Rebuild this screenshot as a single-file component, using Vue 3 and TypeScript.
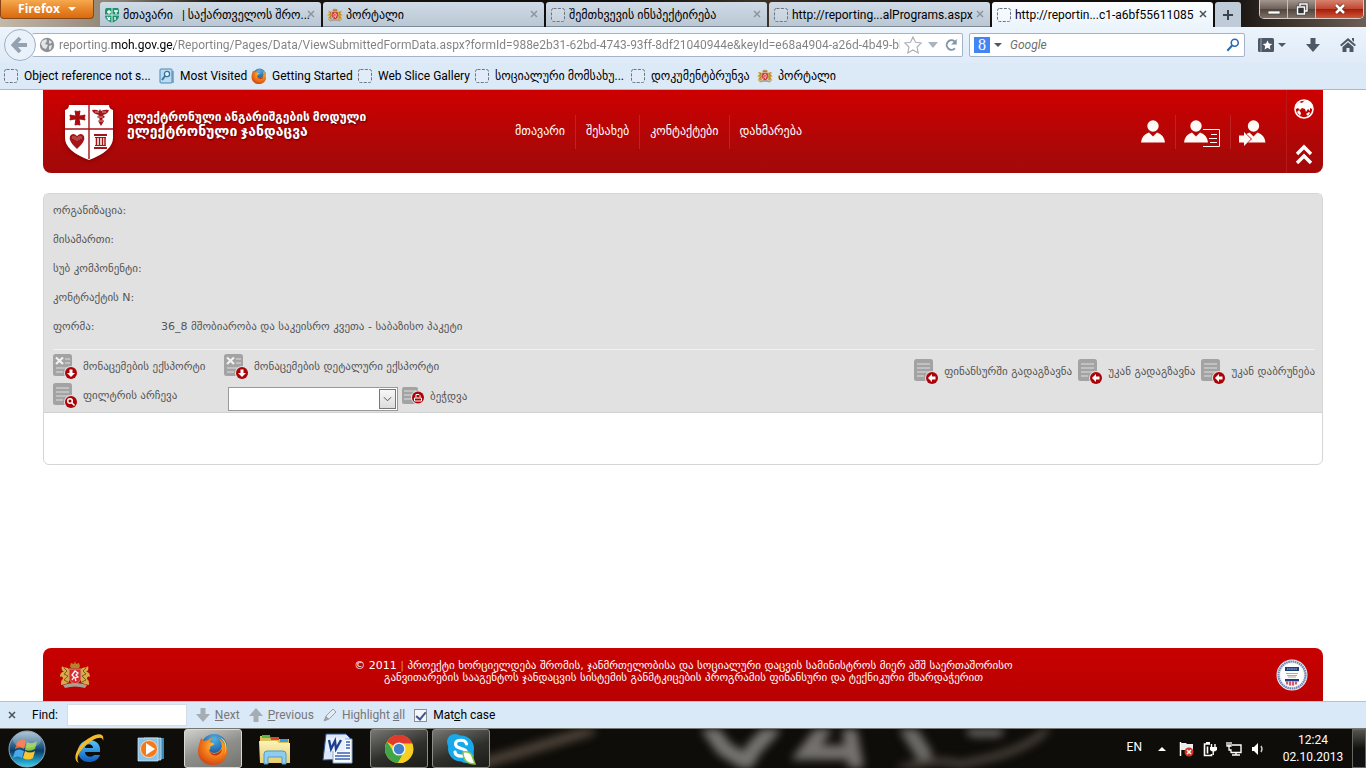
<script setup lang="ts">
import { ref } from 'vue'

interface Tab { title: string; icon: string; active?: boolean }
interface Mark { title: string; icon: string }
interface Field { label: string; value: string }
interface Action { label: string; icon: string }
interface TaskItem { name: string; icon: string; state?: string }

const tabs: Tab[] = [
  { title: 'მთავარი\u00a0\u00a0 | საქართველოს შრო...', icon: 'shield' },
  { title: 'პორტალი', icon: 'arms' },
  { title: 'შემთხვევის ინსპექტირება', icon: 'blank' },
  { title: 'http://reporting...alPrograms.aspx', icon: 'blank' },
  { title: 'http://reportin...c1-a6bf55611085', icon: 'blank', active: true },
]

const marks: Mark[] = [
  { title: 'Object reference not s...', icon: 'blank' },
  { title: 'Most Visited', icon: 'visited' },
  { title: 'Getting Started', icon: 'firefox' },
  { title: 'Web Slice Gallery', icon: 'blank' },
  { title: 'სოციალური მომსახუ...', icon: 'blank' },
  { title: 'დოკუმენტბრუნვა', icon: 'blank' },
  { title: 'პორტალი', icon: 'arms' },
]

const nav: string[] = ['მთავარი', 'შესახებ', 'კონტაქტები', 'დახმარება']

const userLinks: Action[] = [
  { label: 'User', icon: 'user' },
  { label: 'Profile', icon: 'profile' },
  { label: 'Sign in', icon: 'signin' },
]

const fields: Field[] = [
  { label: 'ორგანიზაცია:', value: '' },
  { label: 'მისამართი:', value: '' },
  { label: 'სუბ კომპონენტი:', value: '' },
  { label: 'კონტრაქტის N:', value: '' },
  { label: 'ფორმა:', value: '36_8 მშობიარობა და საკეისრო კვეთა - საბაზისო პაკეტი' },
]

const sendActions: Action[] = [
  { label: 'ფინანსურში გადაგზავნა', icon: 'doc-left' },
  { label: 'უკან გადაგზავნა', icon: 'doc-left' },
  { label: 'უკან დაბრუნება', icon: 'doc-left' },
]

const tasks: TaskItem[] = [
  { name: 'Internet Explorer', icon: 'ie' },
  { name: 'Media Player', icon: 'media' },
  { name: 'Firefox', icon: 'firefox', state: 'current' },
  { name: 'Explorer', icon: 'folder' },
  { name: 'Word', icon: 'word' },
  { name: 'Chrome', icon: 'chrome', state: 'open' },
  { name: 'Skype', icon: 'skype', state: 'open' },
]

const trayIcons: string[] = ['flag', 'power', 'network', 'sound']

const address = ref('reporting.moh.gov.ge/Reporting/Pages/Data/ViewSubmittedFormData.aspx?formId=988e2b31-62bd-4743-93ff-8df21040944e&keyId=e68a4904-a26d-4b49-bb81')
const search = ref('')
const findText = ref('')
const matchCase = ref(true)
const template = ref('')
</script>

<template>
  <svg class="defs" aria-hidden="true">
    <defs>
      <linearGradient id="gOrb" x1="0" y1="0" x2="0" y2="1"><stop offset="0" stop-color="#9db9cc" /><stop offset=".45" stop-color="#1f5684" /><stop offset=".55" stop-color="#0b3b66" /><stop offset="1" stop-color="#35d3f5" /></linearGradient>
      <linearGradient id="gIe" x1="0" y1="0" x2="0" y2="1"><stop offset="0" stop-color="#5ac8fa" /><stop offset="1" stop-color="#0a5cc0" /></linearGradient>
      <radialGradient id="gFox" cx=".6" cy=".3" r=".8"><stop offset="0" stop-color="#ffd23c" /><stop offset=".5" stop-color="#f27a1a" /><stop offset="1" stop-color="#c93a0e" /></radialGradient>
      <radialGradient id="gGlobe" cx=".5" cy=".2" r=".8"><stop offset="0" stop-color="#4fb4ea" /><stop offset="1" stop-color="#0a2f7c" /></radialGradient>
      <linearGradient id="gFolder" x1="0" y1="0" x2="0" y2="1"><stop offset="0" stop-color="#fbf3b8" /><stop offset="1" stop-color="#e8cd6e" /></linearGradient>

      <symbol id="blank" viewBox="0 0 16 16"><rect x="1.5" y="1.5" width="13" height="13" rx="2" fill="#fff" fill-opacity=".15" stroke="#6c7680" stroke-dasharray="3 1.4" /></symbol>
      <symbol id="shield" viewBox="0 0 16 16"><path d="M2 1h12l1 2v6c0 3-3 5-7 7C4 14 1 12 1 9V3z" fill="#1f9270" /><path d="M8 1v15M1 8h14" stroke="#d5eee4" /><path d="M5 3v4M3 5h4M10 4h4M12 4v3M3 10l3 3M6 10l-2 3M11 10v3" stroke="#fff" stroke-width="1.3" /></symbol>
      <symbol id="arms" viewBox="0 0 32 28">
        <path d="M11 5l1-3 3 1 1-3 1 3 3-1 1 3-1 2h-8z" fill="#b5832d" />
        <path d="M10 8C7 5 5 8 3 5c-1 3 0 5 2 6-3 0-4 2-4 5 2-1 3 0 3 2-2 1-2 3-2 6 3-1 8-1 8-4zM22 8c3-3 5 0 7-3 1 3 0 5-2 6 3 0 4 2 4 5-2-1-3 0-3 2 2 1 2 3 2 6-3-1-8-1-8-4z" fill="#d9ab48" />
        <path d="M5 7l3 3-3 3 4 2-4 4 4 2M27 7l-3 3 3 3-4 2 4 4-4 2" fill="none" stroke="#7d5c1e" />
        <path d="M10 8h12v8c0 4-3 6-6 7-3-1-6-3-6-7z" fill="#d82b2f" stroke="#b6a072" />
        <path d="M13 19l2-3-2-2 3-4 3 2-2 2 2 2-3 1 1 3" fill="none" stroke="#fff" stroke-width="1.3" />
        <path d="M4 24q12-4 24 0l-2 3q-10-3-20 0z" fill="#a7a293" />
      </symbol>
      <symbol id="visited" viewBox="0 0 16 16"><path d="M3 3h12v12H3z" fill="#7fb2d8" /><rect x="1" y="1" width="12" height="14" rx="1" fill="#b9dcf2" stroke="#4a86b3" /><circle cx="8" cy="6" r="2.6" fill="#e8f6ff" stroke="#3d6f99" stroke-width="1.3" /><path d="M6 8l-3 4" stroke="#3d6f99" stroke-width="1.8" /></symbol>
      <symbol id="firefox" viewBox="0 0 32 32">
        <circle cx="17" cy="14" r="13" fill="url(#gGlobe)" />
        <path d="M4 5l3 3 4-1c2-2 4-2 5-2-2 1-3 3-3 4 2 1 5 1 4 2-1 2-4 2-4 3 1 1 0 3-1 3 2 4 9 4 12-1 2-4 0-8-3-11 6 3 9 8 9 14 0 8-6 13-14 13C7 32 1 26 1 18 1 13 3 9 4 5z" fill="url(#gFox)" />
        <path d="M22 4c7 4 8 12 5 18 4-6 4-15-5-18z" fill="#ffe058" />
        <path d="M12 17c2 5 9 5 13-1-1 8-11 9-13 1z" fill="#b9340c" />
      </symbol>
      <symbol id="star" viewBox="0 0 16 16"><path d="M8 .8l2.2 4.8 5.2.6-3.8 3.600 1 5.200L8 12.400 3.400 15l1-5.200L.6 6.200l5.200-.6z" fill="#fff" stroke="#a9b0b7" /></symbol>
      <symbol id="globe" viewBox="0 0 16 16"><circle cx="8" cy="8" r="7.2" fill="#8f9294" /><path d="M3 4l4-2 1 2-2 3 3 1-2 4-3-1-2-4zM10 3l3 2-2 2-1-1zM10 9l3-1-1 4-2 1z" fill="#e4e5e6" /></symbol>
      <symbol id="lens" viewBox="0 0 16 16"><circle cx="10" cy="5.5" r="4" fill="none" stroke="#2a6cb0" stroke-width="1.8" /><path d="M7 8.5L1.5 14.5" stroke="#2a6cb0" stroke-width="2.4" /></symbol>
      <symbol id="reload" viewBox="0 0 16 16"><path d="M12.5 11.800A5.500 5.500 0 1 1 12 3.600" fill="none" stroke="#8195a6" stroke-width="2.200" /><path d="M14.500 1v6.500H8z" fill="#8195a6" /></symbol>
      <symbol id="bookmarks" viewBox="0 0 16 14"><rect width="16" height="14" rx="1.5" fill="#4c5866" /><path d="M3 0v14" stroke="#96a3b2" /><path d="M9.5 2.5l1.4 3 3.3.4-2.4 2.2.6 3.3-2.9-1.6-2.9 1.6.6-3.3-2.4-2.2 3.3-.4z" fill="#fff" /></symbol>
      <symbol id="down" viewBox="0 0 14 14"><path d="M4.5 0h5v6H14l-7 8-7-8h4.500z" fill="currentColor" /></symbol>
      <symbol id="home" viewBox="0 0 16 16"><path d="M0 8l8-7 8 7-1.500 1.300L8 3.800 1.500 9.300z" fill="#4c5866" /><path d="M2.500 10L8 5.300 13.500 10v5H9.500v-4h-3v4h-4z" fill="#4c5866" /><path d="M12 1h2v4l-2-2z" fill="#4c5866" /></symbol>

      <symbol id="crest" viewBox="0 0 50 56">
        <path d="M5 1h40q0 4 4 5v28q0 13-24 22Q1 47 1 34V6q4-1 4-5z" fill="#fff" />
        <path d="M25 1v54M1 25h48" stroke="#a41518" stroke-width="1.400" />
        <path d="M11 7q3 1 5 0l-1 5q3 0 6-1-1 3 0 5-3-1-6-1l1 6q-3-1-5 0l1-6q-3 0-6 1 1-2 0-5 3 1 6 1z" fill="#a90b0e" stroke="#a90b0e" />
        <path d="M28 6q4-1 7 1l1-2 1 2q4-2 8-1-1 4-6 5l2 2-3 2 2 2-3 5-3-5 2-2-3-2 2-2q-6-1-7-5z" fill="#a41518" /><path d="M31 8h4M38 8h4M34 13h5M34 17h5" stroke="#fff" stroke-width=".6" />
        <path d="M6 32q3-4 7 0 4-4 7 0 2 5-7 13Q4 37 6 32z" fill="#a41518" /><path d="M9 32v3M11 32v4M13 33v4M15 32v4M17 32v3" fill="none" stroke="#dc9c9c" stroke-width=".7" />
        <path d="M30 30h13v2H30zM31 33h11v1H31zM30 43h13v2H30zM31 41h11v1H31z" fill="#a41518" /><path d="M32.500 33v9M35.500 33v9M38.500 33v9M41 33v9" stroke="#a41518" stroke-width="1.500" />
      </symbol>
      <symbol id="user" viewBox="0 0 38 28"><circle cx="12" cy="6" r="5.700" fill="#fffaf5" /><path d="M0 22.500q1-8 8-10l4 4 4-4q7 2 8 10z" fill="#fffaf5" /></symbol>
      <symbol id="profile" viewBox="0 0 38 28"><circle cx="12" cy="6" r="5.700" fill="#fffaf5" /><path d="M0 22.500q1-8 8-10l4 4 4-4q7 2 8 10z" fill="#fffaf5" /><path d="M19 9.500h16.500v17H19M27 14.500h6M25 18.500h8M26 22.500h7" fill="none" stroke="#fffaf5" /></symbol>
      <symbol id="signin" viewBox="0 0 38 28"><circle cx="14.500" cy="6" r="5.700" fill="#fffaf5" /><path d="M2.500 22.500q1-8 8-10l4 4 4-4q7 2 8 10z" fill="#fffaf5" /><path d="M0 14.500h4v-4l9 8.500-9 8.500v-4H0z" fill="#b30506" /><path d="M0 15.500h5V12l7 7-7 7V22.500H0z" fill="#fffaf5" /></symbol>
      <symbol id="world" viewBox="0 0 20 20"><circle cx="10" cy="10" r="9" fill="none" stroke="#fff" stroke-width="1.600" /><path d="M2 7l3-4 3 1 2-2 4 0 4 4 0 4-2-1 0 3-2-2-2 3-1-3-3-1-2 2-2-2-2 1zM3 13l2-2 2 3-1 3zM12 15l3-2 1 1-2 3z" fill="#fff" /></symbol>
      <symbol id="up2" viewBox="0 0 18 20"><path d="M2 10l7-7 7 7M2 19l7-7 7 7" fill="none" stroke="#fff" stroke-width="3.400" /></symbol>

      <symbol id="doc" viewBox="0 0 26 26"><rect x="0" y="0" width="19" height="22" rx="2.500" fill="#a3a3a3" /><path d="M3 5h13M3 9h13M3 13h13M3 17h7" stroke="#e0e0e0" stroke-width="1.200" /></symbol>
      <symbol id="sheet" viewBox="0 0 26 26"><rect x="0" y="0" width="19" height="22" rx="2.500" fill="#a3a3a3" /><path d="M3 3.500l7 6.500M10 3.500L3 10" stroke="#f0f0f0" stroke-width="2.300" /><path d="M12 5h5M12 9h5M3 14h13M3 18h7" stroke="#e0e0e0" stroke-width="1.200" /></symbol>
      <symbol id="badge" viewBox="0 0 26 26"><circle cx="18" cy="19" r="7" fill="#e0e0e0" /><circle cx="18" cy="19" r="6" fill="#aa0408" /></symbol>
      <symbol id="doc-left" viewBox="0 0 26 26"><use href="#doc" /><use href="#badge" /><path d="M14 19l4-4v2.500h3.500v3H18V23z" fill="#fff" /></symbol>
      <symbol id="sheet-down" viewBox="0 0 26 26"><use href="#sheet" /><use href="#badge" /><path d="M18 23l-4-4h2.500v-3.500h3V19H22z" fill="#fff" /></symbol>
      <symbol id="doc-find" viewBox="0 0 26 26"><use href="#doc" /><use href="#badge" /><circle cx="17" cy="18" r="2.300" fill="none" stroke="#fff" stroke-width="1.500" /><path d="M18.500 19.500l3 3" stroke="#fff" stroke-width="1.600" /></symbol>
      <symbol id="doc-print" viewBox="0 0 24 20"><rect width="16" height="17" rx="2" fill="#a3a3a3" /><path d="M2 4h12M2 8h8M2 12h8" stroke="#e0e0e0" stroke-width="1.200" /><circle cx="16" cy="10.500" r="7" fill="#e0e0e0" /><circle cx="16" cy="10.500" r="6" fill="#aa0408" /><path d="M12.500 11h7v3h-7zM14 10.500v-3h3l1 1v2" fill="none" stroke="#fff" /></symbol>
      <symbol id="usaid" viewBox="0 0 32 32"><circle cx="16" cy="16" r="15.500" fill="#e9edf3" /><circle cx="16" cy="16" r="13.500" fill="none" stroke="#6f88b3" stroke-width="2.200" stroke-dasharray="1.600 .6" /><circle cx="16" cy="16" r="11.500" fill="#fff" /><path d="M9 8h14v4H9zM9 20h14v2.500H9z" fill="#1f3d7d" /><path d="M11 10h10" stroke="#b9c4da" stroke-dasharray="1.500 .6" /><path d="M10 14.500h12M11 16.500h10M12 18h8" stroke="#aaa" /><path d="M9.500 22.500h13q-1 3-6.500 5-5.500-2-6.500-5z" fill="#f6dfe2" /><path d="M11 22.500v3M14 22.500v4M17 22.500v4M20 22.500v3" stroke="#c8364a" stroke-width="1.600" /></symbol>

      <symbol id="pen" viewBox="0 0 14 14"><path d="M1 13l2-5 7-7 3 3-7 7z" fill="#e6ebf0" stroke="#98a1aa" /><path d="M3 8l3 3-5 2z" fill="#98a1aa" /></symbol>

      <symbol id="orb" viewBox="0 0 38 38"><circle cx="19" cy="19" r="18" fill="url(#gOrb)" stroke="#8fa9ba" /><path d="M9 12q5-4 9-1l-2 8q-4-3-9 0z" fill="#f0602c" /><path d="M19 12q5 3 10-1l-2 8q-5 3-10 1z" fill="#8cc63e" /><path d="M7 21q4-3 9 0l-2 7q-4-3-9 0z" fill="#4aa9ea" /><path d="M17 21q5 3 10 0l-2 7q-5 3-10 0z" fill="#fdc62f" /><ellipse cx="19" cy="10" rx="14" ry="8" fill="#fff" opacity=".22" /></symbol>
      <symbol id="ie" viewBox="0 0 32 32"><path d="M27 19H12c0 5 7 6 9 3h6c-2 5-6 7-11 7C9 29 5 24 5 18S10 7 16 7c8 0 12 5 11 12zM12 15h8c0-5-8-5-8 0z" fill="url(#gIe)" /><path d="M6 30C-3 26 6 10 18 4 25 0 32 0 30 8c0-4-4-4-10-1C9 13 1 25 6 30z" fill="#f5b92a" /></symbol>
      <symbol id="media" viewBox="0 0 32 32"><path d="M12 5h17v21H12z" fill="#3c86b5" /><path d="M9 5h17v22H9z" fill="#6fb0d6" stroke="#d7edf8" stroke-width=".7" /><path d="M3 5h20v23H3z" fill="#8cc4e6" stroke="#d7edf8" stroke-width=".7" /><circle cx="14" cy="16" r="8.500" fill="#f27a1c" stroke="#fbd4b3" /><path d="M11 10l9 6-9 6z" fill="#fff" /></symbol>
      <symbol id="folder" viewBox="0 0 32 32"><path d="M1 3h10l1 3h18v23H1z" fill="#ddbf5a" /><path d="M3 2h8v3H3z" fill="#57b54a" /><path d="M12 4h8v3h-8z" fill="#d9482e" /><path d="M21 6h8v3h-8z" fill="#3a9de0" /><path d="M0 8h18l2 2h11v20H1z" fill="url(#gFolder)" /><path d="M5 31V21q0-3 3-3h16q3 0 3 3v10h-4v-7H9v7z" fill="#8ecdf0" stroke="#4e9bc9" /></symbol>
      <symbol id="word" viewBox="0 0 32 32"><path d="M5 1h20l4 4v21l-27 1z" fill="#dce8f7" stroke="#2b55a0" /><path d="M12 6h19v24H12z" fill="#f6f9fd" stroke="#8da9d3" /><path d="M16 20h13M14 23h15M14 26h15M25 9h4M25 12h4M25 15h4" stroke="#3b62ae" stroke-width="1.700" /><path d="M5 5h19v13H5z" fill="#e7f0fb" /><path d="M8 7l2 9 4-8 1 8 5-9" fill="none" stroke="#1d3f91" stroke-width="2.300" /></symbol>
      <symbol id="chrome" viewBox="0 0 32 32"><circle cx="16" cy="16" r="14" fill="#f7cf20" /><path d="M16 16L4 8.800A14 14 0 0 1 29.300 11H16z" fill="#df3a2c" /><path d="M4 8.800A14 14 0 0 0 15 30l6-10.500L11 19z" fill="#3fa648" /><path d="M16 10.500h13.300A14 14 0 0 1 15 30l6-11z" fill="#f7cf20" /><circle cx="16" cy="16" r="6.600" fill="#f2f2f2" /><circle cx="16" cy="16" r="5.200" fill="#3f82c7" /></symbol>
      <symbol id="skype" viewBox="0 0 32 32"><circle cx="10" cy="9" r="8" fill="#18a9ea" /><circle cx="21" cy="22" r="8" fill="#18a9ea" /><circle cx="16" cy="15.500" r="13" fill="#18a9ea" /><path d="M21.500 11c-1-5-11-5-11 0 0 6 11 3 11 8.500 0 5-11 5-11.500-.5" fill="none" stroke="#fff" stroke-width="3.200" stroke-linecap="round" /><path d="M18 19q7-1 9 4l3 8q-12 0-12-12z" fill="#fff" stroke="#8bc53f" stroke-width="1.500" /></symbol>
      <symbol id="flag" viewBox="0 0 16 16"><path d="M2.500 1v14" stroke="#fff" stroke-width="1.500" /><path d="M3 2h5l1 1h6v7H9L8 9H3z" fill="#eee" /><circle cx="11" cy="11" r="4.500" fill="#d93025" /><path d="M9 9l4 4M13 9l-4 4" stroke="#fff" stroke-width="1.500" /></symbol>
      <symbol id="power" viewBox="0 0 16 16"><path d="M8 3H2.500v11.500h7V13" fill="none" stroke="#fff" stroke-width="1.600" /><path d="M4 1h4v2H4z" fill="#fff" /><path d="M5.500 5.500v7" stroke="#fff" stroke-width="1.600" /><path d="M9.500 3v3M13 3v3M11.200 10v4" stroke="#fff" stroke-width="1.400" /><path d="M8 6h7v3q-3.500 3-7 0z" fill="#fff" /></symbol>
      <symbol id="network" viewBox="0 0 16 16"><path d="M6 4h9v7.500H5M6 14h8M10 12v2" fill="none" stroke="#fff" stroke-width="1.400" /><path d="M1 1v4h4V1M3 1v8h2v3" fill="none" stroke="#fff" stroke-width="1.300" /></symbol>
      <symbol id="sound" viewBox="0 0 16 16"><path d="M2 6h2l4-4v12l-4-4H2z" fill="#fff" /><path d="M11 5q2 3 0 6" fill="none" stroke="#ccc" stroke-width="1.400" /></symbol>
    </defs>
  </svg>

  <div class="screen">
    <header class="chrome">
      <div class="tabstrip">
        <button class="ff-button" type="button">Firefox <i class="caret"></i></button>
        <div class="tabs" role="tablist">
          <div v-for="tab in tabs" :key="tab.title" class="tab" :class="{ active: tab.active }">
            <button class="tab-main" type="button" role="tab" :aria-selected="!!tab.active">
              <svg class="i16"><use :href="'#' + tab.icon" /></svg>
              <span>{{ tab.title }}</span>
            </button>
            <button class="tab-close" type="button" aria-label="Close tab"><svg viewBox="0 0 8 8"><path d="M1 1l6 6M7 1L1 7" /></svg></button>
          </div>
          <button class="new-tab" type="button" aria-label="New tab"><svg viewBox="0 0 12 12"><path d="M6 1v10M1 6h10" /></svg></button>
        </div>
        <div class="win-controls">
          <button type="button" aria-label="Minimize"><svg viewBox="0 0 16 14"><path d="M2 9h12v3H2z" fill="#fff" stroke="#444" stroke-width=".7" /></svg></button>
          <button type="button" aria-label="Restore"><svg viewBox="0 0 16 14"><path d="M6 4V2h7v7h-2M3.500 5h7v7h-7zM6 7.500h2v2H6z" fill="none" stroke="#333" stroke-width="2.600" /><path d="M6 4V2h7v7h-2M3.500 5h7v7h-7z" fill="none" stroke="#fff" stroke-width="1.500" /></svg></button>
          <button class="close" type="button" aria-label="Close"><svg viewBox="0 0 16 14"><path d="M4 3l8 8M12 3l-8 8" stroke="#5c2a22" stroke-width="4" /><path d="M4 3l8 8M12 3l-8 8" stroke="#fff" stroke-width="2.500" /></svg></button>
        </div>
      </div>

      <div class="toolbar">
        <button class="back" type="button" aria-label="Back"><svg viewBox="0 0 18 18"><path d="M9 2L2.500 9 9 16M3 9h13" /></svg></button>
        <div class="urlbox">
          <svg class="i16"><use href="#globe" /></svg>
          <input v-model="address" class="address" aria-label="Address" spellcheck="false">
          <button type="button" aria-label="Bookmark"><svg class="i18"><use href="#star" /></svg></button>
          <button type="button" aria-label="History"><i class="caret grey"></i></button>
          <button type="button" aria-label="Reload"><svg class="i14"><use href="#reload" /></svg></button>
        </div>
        <div class="searchbox">
          <span class="g-logo">8</span><i class="caret dark"></i>
          <input v-model="search" aria-label="Search" placeholder="Google">
          <button type="button" aria-label="Go"><svg class="i14"><use href="#lens" /></svg></button>
        </div>
        <div class="tools">
          <button type="button" aria-label="Bookmarks"><svg class="bm"><use href="#bookmarks" /></svg><i class="caret dark"></i></button>
          <button type="button" aria-label="Downloads"><svg class="i14"><use href="#down" /></svg></button>
          <button type="button" aria-label="Home"><svg class="i16"><use href="#home" /></svg></button>
        </div>
      </div>

      <nav class="marks" aria-label="Bookmarks">
        <a v-for="mark in marks" :key="mark.title" href="#"><svg class="i16"><use :href="'#' + mark.icon" /></svg><span>{{ mark.title }}</span></a>
      </nav>
    </header>

    <main class="page">
      <header class="banner">
        <a class="brand" href="#">
          <svg class="crest"><use href="#crest" /></svg>
          <span class="brand-text"><b>ელექტრონული ანგარიშგების მოდული</b><b class="big">ელექტრონული ჯანდაცვა</b></span>
        </a>
        <nav class="menu"><a v-for="item in nav" :key="item" href="#">{{ item }}</a></nav>
        <div class="user-links">
          <a v-for="link in userLinks" :key="link.icon" href="#" :aria-label="link.label"><svg><use :href="'#' + link.icon" /></svg></a>
        </div>
        <div class="side">
          <button type="button" aria-label="Language"><svg class="i20"><use href="#world" /></svg></button>
          <button type="button" aria-label="Collapse"><svg class="i20"><use href="#up2" /></svg></button>
        </div>
      </header>

      <section class="panel">
        <div class="panel-head">
          <dl class="fields">
            <div v-for="field in fields" :key="field.label"><dt>{{ field.label }}</dt><dd>{{ field.value }}</dd></div>
          </dl>
          <div class="actions">
            <div class="left">
              <button class="action" type="button"><svg><use href="#sheet-down" /></svg>მონაცემების ექსპორტი</button>
              <button class="action" type="button"><svg><use href="#sheet-down" /></svg>მონაცემების დეტალური ექსპორტი</button>
              <button class="action" type="button"><svg><use href="#doc-find" /></svg>ფილტრის არჩევა</button>
              <div class="print-row">
                <span class="picker">
                  <select v-model="template" aria-label="ბეჭდვა"><option value=""></option></select>
                  <span class="picker-arrow"><svg viewBox="0 0 10 6"><path d="M1 1l4 4 4-4" /></svg></span>
                </span>
                <button class="action print" type="button"><svg><use href="#doc-print" /></svg>ბეჭდვა</button>
              </div>
            </div>
            <div class="right">
              <button v-for="a in sendActions" :key="a.label" class="action" type="button"><svg><use :href="'#' + a.icon" /></svg>{{ a.label }}</button>
            </div>
          </div>
        </div>
        <div class="panel-body"></div>
      </section>

      <footer class="footer">
        <svg class="arms"><use href="#arms" /></svg>
        <p>© 2011 <i>|</i> პროექტი ხორციელდება შრომის, ჯანმრთელობისა და სოციალური დაცვის სამინისტროს მიერ აშშ საერთაშორისო<br>განვითარების სააგენტოს ჯანდაცვის სისტემის განმტკიცების პროგრამის ფინანსური და ტექნიკური მხარდაჭერით</p>
        <svg class="usaid"><use href="#usaid" /></svg>
      </footer>
    </main>

    <form class="findbar" @submit.prevent>
      <button class="find-close" type="button" aria-label="Close"><svg viewBox="0 0 8 8"><path d="M1 1l6 6M7 1L1 7" /></svg></button>
      <label for="find">Find:</label>
      <input id="find" v-model="findText" type="text">
      <button type="button"><svg class="i14"><use href="#down" /></svg><span><u>N</u>ext</span></button>
      <button type="button"><svg class="i14 flip"><use href="#down" /></svg><span><u>P</u>revious</span></button>
      <button type="button"><svg class="i14"><use href="#pen" /></svg><span>Highlight <u>a</u>ll</span></button>
      <label class="match"><input v-model="matchCase" type="checkbox"><span>Mat<u>c</u>h case</span></label>
    </form>

    <footer class="taskbar">
      <svg class="wallpaper" viewBox="0 0 1366 40" preserveAspectRatio="none" aria-hidden="true">
        <g fill="none" stroke-linecap="round">
          <path d="M480 36L590 2" stroke="#51463c" stroke-width="10" />
          <path d="M710 0l14 20 22 14M772 0l-18 20-8 14" stroke="#757370" stroke-width="16" />
          <path d="M824 0l-18 24h46M850 4l6 34" stroke="#74716e" stroke-width="15" />
          <path d="M908 0l16 26M974 0h22" stroke="#6d6b68" stroke-width="16" />
          <path d="M880 52q40-26 80-16 70-12 90-40" stroke="#4d463f" stroke-width="7" />
        </g>
      </svg>
      <button class="start" type="button" aria-label="Start"><svg><use href="#orb" /></svg></button>
      <div class="tasks">
        <button v-for="task in tasks" :key="task.name" type="button" :class="task.state" :aria-label="task.name"><svg><use :href="'#' + task.icon" /></svg></button>
      </div>
      <div class="tray">
        <span class="lang">EN</span>
        <button class="tray-up" type="button" aria-label="Show hidden icons"><i></i></button>
        <svg v-for="t in trayIcons" :key="t" class="i16"><use :href="'#' + t" /></svg>
        <div class="clock"><time>12:24</time><time>02.10.2013</time></div>
      </div>
      <button class="peek" type="button" aria-label="Show desktop"></button>
    </footer>
  </div>
</template>

<style>
html, body { margin: 0; background: #fff; }
</style>

<style scoped>
* { box-sizing: border-box; }
button, input, select { font: inherit; color: inherit; }
button { padding: 0; border: 0; background: none; display: flex; align-items: center; }
a { color: inherit; text-decoration: none; }
svg { display: block; flex: none; }
.defs { position: absolute; width: 0; height: 0; }
.i14 { width: 14px; height: 14px; }
.i16 { width: 16px; height: 16px; }
.i18 { width: 18px; height: 18px; }
.i20 { width: 20px; height: 20px; }
.screen { min-height: 100vh; display: flex; flex-direction: column; font: 12px/16px Roboto, "DejaVu Sans", sans-serif; color: #000; }
.caret { display: inline-block; border: 4px solid transparent; border-top-color: #fff; border-bottom: 0; }
.caret.grey { border-width: 6px 5px 0; border-top-color: #a9b4bf; }
.caret.dark { border-width: 4px 4px 0; border-top-color: #4c5866; }

.tabstrip { height: 27px; display: flex; background: linear-gradient(90deg, #c3b9ab 0, #8b8070 120px, #1b1510 220px, #100d0a 620px, #3e3224 760px, #15110d 900px, #100c0a 1220px, #6d5f55 1366px); }
.ff-button { width: 94px; height: 19px; justify-content: center; gap: 8px; color: #fff; font: 700 12px/16px "Open Sans", sans-serif; background: linear-gradient(#f5a94e, #e8862a 50%, #d76b0d); border: 1px solid #8b4413; border-top: 0; border-radius: 0 0 4px 4px; }
.tabs { flex: 1; display: flex; gap: 2px; padding: 2px 0 0 6px; min-width: 0; }
.tab { flex: 0 1 221px; min-width: 0; display: flex; align-items: center; padding: 0 6px 0 4px; background: linear-gradient(#cfdbe6, #bac7d4); border-bottom: 1px solid #7d8995; border-radius: 3px 3px 0 0; }
.tab.active { background: linear-gradient(#fbfdff, #ecf4fc); border-bottom-color: #ecf4fc; }
.tab-main { flex: 1; min-width: 0; gap: 3px; padding-top: 2px; }
.tab-main span { white-space: nowrap; }
.tab-close svg, .find-close svg { width: 8px; height: 8px; fill: none; stroke: #8b959f; stroke-width: 1.5; }
.tab.active .tab-close svg, .find-close svg { stroke: #49525b; }
.new-tab { width: 26px; justify-content: center; background: #bfccd8; border-radius: 3px 3px 0 0; }
.new-tab svg { width: 12px; height: 12px; stroke: #3b4550; stroke-width: 2; }
.win-controls { display: flex; height: 19px; margin-right: 2px; border: 1px solid #d8cdc4; border-top: 0; border-radius: 0 0 5px 5px; overflow: hidden; }
.win-controls button { width: 28px; justify-content: center; background: linear-gradient(#a2968e, #6b5f58 50%, #50443c 51%, #7d7068); border-right: 1px solid #c9bdb4; }
.win-controls .close { width: 47px; border: 0; background: linear-gradient(#d7826f, #bf4630 50%, #a51c08 51%, #cf5638); }
.win-controls svg { width: 16px; height: 14px; }

.toolbar { height: 36px; display: flex; align-items: center; padding: 0 10px 0 4px; background: linear-gradient(#ecf4fc, #dfebf8); }
.back { position: relative; width: 32px; height: 32px; justify-content: center; background: #e9f1fa; border: 1px solid #9fb0c4; border-radius: 50%; }
.back svg { width: 18px; height: 18px; fill: none; stroke: #94a2b0; stroke-width: 4; }
.urlbox, .searchbox { height: 24px; display: flex; align-items: center; background: #fff; border: 1px solid #a4b3c8; border-radius: 2px; }
.urlbox { flex: 1; min-width: 0; margin-left: -4px; padding: 0 4px 0 7px; gap: 4px; border-left: 0; }
.urlbox button:nth-of-type(2) { margin: 0 2px; }
.address { flex: 1; min-width: 0; height: 20px; padding: 0; border: 0; outline: 0; color: transparent; background: linear-gradient(90deg, #808080 52px, #000 52px, #000 115px, #808080 115px); -webkit-background-clip: text; background-clip: text; }
.searchbox { width: 276px; margin-left: 6px; padding: 0 4px; gap: 4px; }
.searchbox input { flex: 1; min-width: 0; padding: 0 4px; border: 0; outline: 0; background: none; }
.searchbox input::placeholder { color: #6f6f6f; font-style: italic; opacity: 1; }
.g-logo { width: 16px; height: 16px; color: #fff; background: #4385f4; font: 16px/16px "Liberation Serif", serif; text-align: center; }
.tools { display: flex; align-items: center; gap: 20px; margin-left: 13px; color: #4c5866; }
.tools button { gap: 4px; }
.bm { width: 16px; height: 14px; }
.marks { height: 27px; padding: 0 3px; display: grid; grid-template-columns: 156px 92px 106px 117px 156px 127px 80px; align-items: center; background: #dce9f7; border-bottom: 1px solid #a9b9cc; }
.marks a { display: flex; gap: 5px; white-space: nowrap; }

.page { flex: 1; display: flex; flex-direction: column; width: calc(100% - 86px); max-width: 1280px; margin: 0 auto; }
.banner { min-height: 83px; display: flex; align-items: center; padding-left: 21px; color: #fff; background: linear-gradient(#ce0000, #a80808 80%, #a30808); border-radius: 0 0 8px 8px; }
.brand { display: flex; gap: 13px; flex: 0 0 441px; }
.crest { width: 50px; height: 56px; filter: drop-shadow(0 1px 2px #700); }
.brand-text { display: flex; flex-direction: column; padding-top: 6px; font-size: 12px; line-height: 14px; white-space: nowrap; text-shadow: 1px 1px 2px #500; }
.big { font-size: 14px; }
.menu { display: flex; flex: 1; font-size: 12px; }
.menu a { padding: 8px 10px 10px; border-left: 1px solid #c02222; white-space: nowrap; }
.menu a:first-child { border: 0; }
.user-links { display: flex; gap: 8px; }
.user-links a { padding: 5px 0 0 8px; height: 34px; border-left: 1px solid #c02222; }
.user-links a:first-child { border: 0; width: 34px; }
.user-links svg { width: 38px; height: 28px; }
.side { align-self: stretch; display: flex; flex-direction: column; justify-content: space-between; margin-left: 9px; padding: 9px 9px 9px 7px; border-left: 1px solid #b81818; }

.panel { margin-top: 20px; border: 1px solid #d5d5d5; border-radius: 6px; color: #555; font: 11px/16px "DejaVu Sans", sans-serif; }
.panel-head { padding: 2px 7px 0 9px; background: #e1e1e1; border-bottom: 1px solid #d2d2d2; }
.fields { margin: 0; padding-bottom: 8px; border-bottom: 1px solid #f2f2f2; }
.fields div { display: flex; height: 29px; align-items: center; }
.fields dt { width: 108px; white-space: nowrap; }
.fields dd { margin: 0; }
.actions { display: flex; justify-content: space-between; align-items: flex-start; padding: 4px 0 0; }
.left { display: grid; grid-template-columns: 171px auto; grid-auto-rows: 29px; align-items: start; }
.right { display: flex; gap: 6px; padding-top: 5px; }
.action { gap: 4px; white-space: nowrap; }
.action svg { width: 26px; height: 26px; }
.print svg { width: 24px; height: 20px; }
.print-row { display: flex; align-items: flex-start; gap: 4px; padding: 4px 0 0 4px; }
.picker { position: relative; display: flex; }
.picker select { width: 170px; height: 24px; appearance: none; background: #fff; border: 1px solid #999; border-radius: 0; }
.picker-arrow { position: absolute; top: 2px; right: 2px; width: 17px; height: 20px; display: flex; align-items: center; justify-content: center; background: linear-gradient(#f7f7f7, #dcdcdc); border: 1px solid #777; pointer-events: none; }
.picker-arrow svg { width: 9px; height: 6px; fill: none; stroke: #444; }
.panel-body { height: 51px; }

.footer { margin-top: auto; min-height: 53px; display: flex; align-items: center; padding: 0 15px 0 16px; color: #fff; background: linear-gradient(#c80000, #b80202); border-radius: 8px 8px 0 0; }
.footer p { flex: 1; margin: 0; padding-bottom: 6px; text-align: center; font: 11px/12px "DejaVu Sans", sans-serif; }
.footer i { color: #e58a5a; font-style: normal; }
.arms { width: 32px; height: 28px; }
.usaid { width: 32px; height: 32px; }

.findbar { height: 27px; display: flex; align-items: center; gap: 9px; padding: 0 8px; color: #000; background: #dae9f8; border-top: 1px solid #b4c3d4; }
.findbar button { gap: 5px; color: #777; }
.findbar button svg { color: #a5acb3; }
.find-close { width: 15px; }
#find { width: 120px; height: 22px; padding: 0 4px; background: #fff; border: 1px solid #d3dde8; }
.flip { transform: rotate(180deg); }
.match { display: flex; align-items: center; gap: 6px; }
.match input { appearance: none; width: 13px; height: 13px; margin: 0; background: #f4f6f8; border: 1px solid #8e8f8f; display: grid; place-items: center; }
.match input:checked::after { content: ""; width: 4px; height: 8px; margin-bottom: 2px; border: solid #3d5592; border-width: 0 2px 2px 0; transform: rotate(40deg); }

.taskbar { position: relative; height: 40px; display: flex; align-items: stretch; overflow: hidden; background: #0f0d09; border-top: 1px solid #77776f; color: #fff; }
.wallpaper { position: absolute; inset: 0; width: 100%; height: 100%; filter: blur(4px); }
.start, .tasks, .tray, .peek { position: relative; }
.start { width: 54px; padding-left: 8px; }
.start svg { width: 38px; height: 38px; }
.tasks { display: flex; gap: 4px; padding-left: 6px; }
.tasks button { width: 58px; justify-content: center; border: 1px solid transparent; border-radius: 3px; }
.tasks svg { width: 32px; height: 32px; }
.tasks .open { border-color: #8d8d88; background: linear-gradient(160deg, #777773, #2f2f2b 55%, #1b1b17); }
.tasks .current { border-color: #d8d8d4; background: linear-gradient(160deg, #d0d0ce, #8f8f8b 50%, #73736f); }
.tray { margin-left: auto; display: flex; align-items: center; gap: 8px; }
.lang { margin-right: 8px; padding-bottom: 4px; }
.tray-up { margin-right: 4px; }
.tray-up i { border: 4px solid transparent; border-top: 0; border-bottom-color: #fff; }
.clock { width: 78px; display: flex; flex-direction: column; align-items: center; line-height: 17px; }
.peek { width: 14px; background: linear-gradient(#55554f, #111 50%); border: 1px solid #66665f; }
</style>
